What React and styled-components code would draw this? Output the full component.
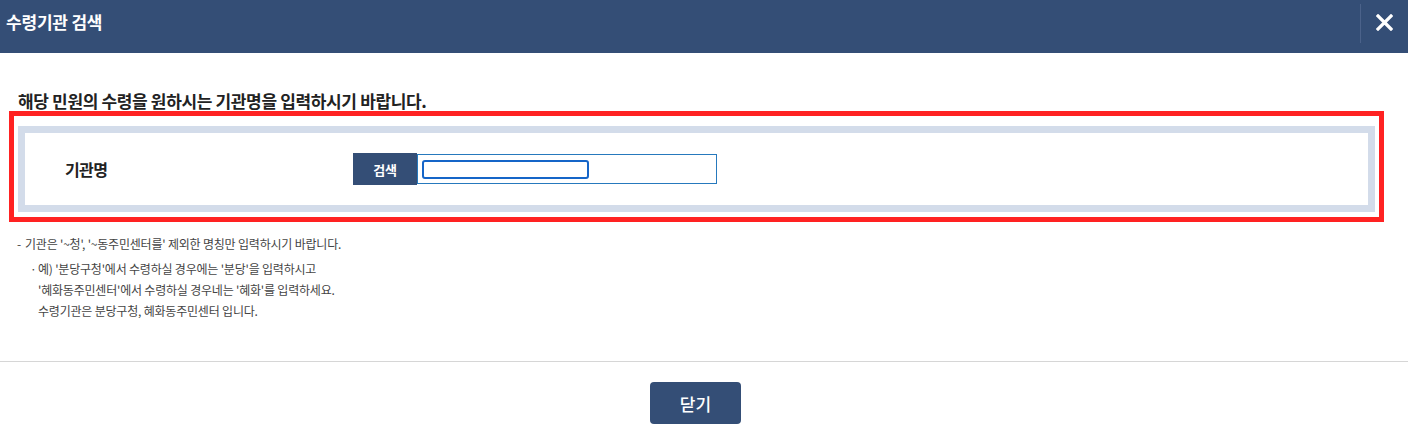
import React from "react";
import styled, { createGlobalStyle } from "styled-components";

const GlobalStyle = createGlobalStyle`
  html, body {
    margin: 0;
    padding: 0;
    background: #fff;
  }
  body {
    font-family: "Noto Sans CJK KR", "Noto Sans", sans-serif;
    color: #333;
  }
`;

export default function App() {
  return (
    <>
      <GlobalStyle />
      <Popup>
        <Header>
          <Title>수령기관 검색</Title>
          <CloseButton type="button" aria-label="닫기">
            <svg width="17" height="17" viewBox="0 0 17 17">
              <path
                d="M2 2 L15 15 M15 2 L2 15"
                stroke="#fff"
                strokeWidth="3.2"
                strokeLinecap="square"
              />
            </svg>
          </CloseButton>
        </Header>

        <Body>
          <Guide>해당 민원의 수령을 원하시는 기관명을 입력하시기 바랍니다.</Guide>

          <Highlight>
            <SearchFrame>
              <Label>기관명</Label>
              <SearchGroup>
                <SearchButton type="button">검색</SearchButton>
                <InputBox>
                  <Field type="text" />
                </InputBox>
              </SearchGroup>
            </SearchFrame>
          </Highlight>

          <Notes>
            <Note>
              <Dash>-</Dash>기관은 '~청', '~동주민센터를' 제외한 명칭만 입력하시기 바랍니다.
            </Note>
            <SubNotes>
              <SubNote>
                <Dot>·</Dot>예) '분당구청'에서 수령하실 경우에는 '분당'을 입력하시고
              </SubNote>
              <SubNote>'혜화동주민센터'에서 수령하실 경우네는 '혜화'를 입력하세요.</SubNote>
              <SubNote>수령기관은 분당구청, 혜화동주민센터 입니다.</SubNote>
            </SubNotes>
          </Notes>
        </Body>

        <Footer>
          <CloseAction type="button">닫기</CloseAction>
        </Footer>
      </Popup>
    </>
  );
}

const Popup = styled.div`
  width: 1408px;
  height: 433px;
  overflow: hidden;
  background: #fff;
`;

const Header = styled.div`
  display: flex;
  justify-content: space-between;
  align-items: flex-start;
  height: 53px;
  background: #344e76;
`;

const Title = styled.h1`
  margin: 0;
  padding: 10px 0 0 6px;
  font-size: 17px;
  line-height: 24px;
  font-weight: 700;
  letter-spacing: -0.2px;
  color: #fff;
`;

const CloseButton = styled.button`
  display: flex;
  align-items: center;
  justify-content: center;
  width: 48px;
  height: 39px;
  margin-top: 4px;
  padding: 0 0 3px 0;
  border: 0;
  border-left: 1px solid #4b628a;
  background: transparent;
  cursor: pointer;
`;

const Body = styled.div`
  padding-top: 38px;
  height: 308px;
  box-sizing: border-box;
`;

const Guide = styled.p`
  margin: 0;
  padding-left: 18px;
  font-size: 17px;
  line-height: 20px;
  font-weight: 700;
  letter-spacing: -0.35px;
  color: #222;
`;

const Highlight = styled.div`
  margin: 0 24px 0 9px;
  padding: 10px 4px 5px;
  border: 5px solid #ff2222;
`;

const SearchFrame = styled.div`
  display: flex;
  align-items: center;
  height: 72px;
  border: 7px solid #d3dcea;
  padding-left: 40px;
`;

const Label = styled.span`
  width: 288px;
  font-size: 16px;
  font-weight: 700;
  letter-spacing: -0.6px;
  color: #222;
`;

const SearchGroup = styled.div`
  display: flex;
  align-items: center;
`;

const SearchButton = styled.button`
  width: 64px;
  height: 32px;
  border: 0;
  padding: 0;
  background: #344e76;
  color: #fff;
  font-family: inherit;
  font-size: 13px;
  font-weight: 700;
  letter-spacing: -0.3px;
`;

const InputBox = styled.div`
  display: flex;
  align-items: flex-start;
  width: 300px;
  height: 30px;
  box-sizing: border-box;
  padding: 5px 0 0 4px;
  border: 1px solid #2679bd;
  background: #fff;
`;

const Field = styled.input`
  width: 167px;
  height: 19px;
  box-sizing: border-box;
  margin: 0;
  border: 2px solid #1565c8;
  border-radius: 3px;
  outline: none;
  font-family: inherit;
  font-size: 12px;
`;

const Notes = styled.div`
  padding: 11px 0 0 17px;
  font-size: 12px;
  line-height: 21px;
  letter-spacing: -0.2px;
  color: #444;
`;

const Note = styled.p`
  margin: 0;
`;

const Dash = styled.span`
  display: inline-block;
  width: 8px;
`;

const SubNotes = styled.div`
  margin-top: 4px;
  padding-left: 21px;
`;

const SubNote = styled.p`
  margin: 0;
  position: relative;
`;

const Dot = styled.span`
  position: absolute;
  left: -8px;
`;

const Footer = styled.div`
  display: flex;
  justify-content: center;
  padding: 20px 17px 0 0;
  border-top: 1px solid #d6d6d6;
`;

const CloseAction = styled.button`
  width: 91px;
  height: 42px;
  border: 0;
  border-radius: 4px;
  background: #344e76;
  color: #fff;
  font-family: inherit;
  font-size: 17px;
  font-weight: 500;
  cursor: pointer;
`;
